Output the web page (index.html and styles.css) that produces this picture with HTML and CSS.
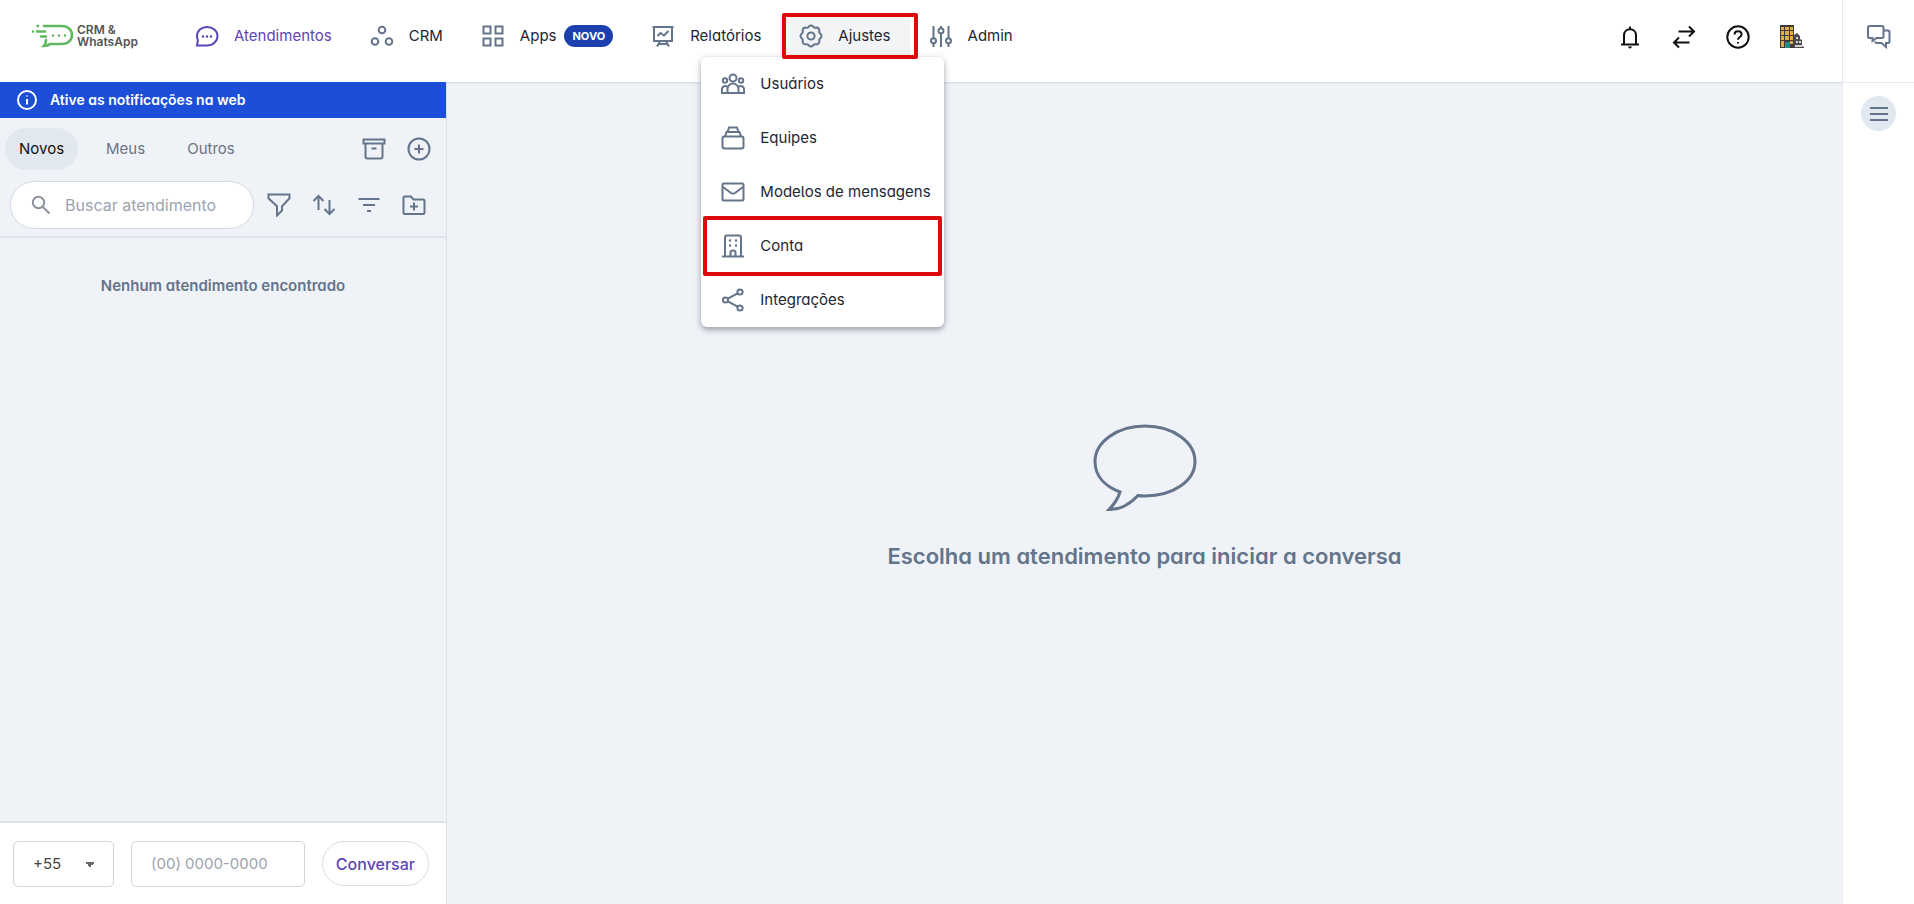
FILE: index.html
```html
<!DOCTYPE html>
<html lang="pt-BR">
<head>
    <meta charset="UTF-8">
    <meta name="viewport" content="width=device-width, initial-scale=1.0">
    <title>Atendimentos</title>
    <link rel="stylesheet" href="styles.css">
</head>
<body>
    <div class="app">

        <!-- Header -->
        <header class="header">
            <a class="logo" href="#" aria-label="CRM &amp; WhatsApp">
                <svg class="logo-mark" viewBox="0 0 42 24">
                    <path d="M12 2h18c6 0 10 4 10 9s-4 9-10 9H18c-2 2-3 2-6 2 2-2 2-4 2-6"/>
                    <path d="M5 7.500h8M9 12.500h5M1 7.500h0M5.500 2h.5"/>
                    <path d="M21 11.500h0M27 11.500h0M33 11.500h0"/>
                </svg>
                <span class="logo-text">CRM &amp;<br>WhatsApp</span>
            </a>

            <nav class="nav">
                <a class="nav-item active" href="#">
                    <svg class="icon" viewBox="0 0 24 24">
                        <path d="M2 21.500l.9-5.200A9.400 9.400 0 0 1 2 12c0-5.200 4.400-9 10-9s10.500 3.800 10.500 9-4.500 9.500-10.500 9.500z"/>
                        <path class="dots" d="M8 12.500h0M12 12.500h0M16 12.500h0"/>
                    </svg>
                    <span>Atendimentos</span>
                </a>
                <a class="nav-item" href="#">
                    <svg class="icon" viewBox="0 0 24 24">
                        <circle cx="12" cy="6" r="3.300"/><circle cx="5" cy="17.500" r="3.300"/><circle cx="19" cy="17.500" r="3.300"/>
                    </svg>
                    <span>CRM</span>
                </a>
                <a class="nav-item" href="#">
                    <svg class="icon" viewBox="0 0 24 24">
                        <path d="M2.500 2.500h7v7h-7zM14.500 2.500h7v7h-7zM2.500 14.500h7v7h-7zM14.500 14.500h7v7h-7z"/>
                    </svg>
                    <span>Apps</span>
                    <span class="badge">NOVO</span>
                </a>
                <a class="nav-item" href="#">
                    <svg class="icon" viewBox="0 0 24 24">
                        <path d="M1.500 3h21M3 3v14h18V3M9 17.500l-3 5M15 17.500l3 5M8 20h8"/>
                        <path d="M6.500 12l3-3 3.500 2.500 4.500-4.500"/>
                    </svg>
                    <span>Relatórios</span>
                </a>
                <div class="nav-group">
                    <button class="nav-item open marked" type="button" aria-expanded="true">
                        <svg class="icon" viewBox="0 0 24 24">
                            <path d="M9.800 2.500Q12 .5 14.200 2.500Q14.700 4.200 17.200 3.600Q20.300 3.700 20.400 6.800Q19.800 9.300 21.500 9.800Q23.500 12 21.500 14.200Q19.800 14.700 20.400 17.200Q20.300 20.300 17.200 20.400Q14.700 19.800 14.200 21.500Q12 23.500 9.800 21.500Q9.300 19.800 6.800 20.400Q3.700 20.300 3.600 17.200Q4.200 14.700 2.500 14.200Q.5 12 2.500 9.800Q4.200 9.300 3.600 6.800Q3.700 3.700 6.800 3.600Q9.300 4.200 9.800 2.500z"/>
                            <circle cx="12" cy="12" r="3.600"/>
                        </svg>
                        <span>Ajustes</span>
                    </button>

                    <!-- Ajustes menu -->
                    <div class="menu">
                        <a class="menu-item" href="#">
                            <svg class="icon" viewBox="0 0 24 24">
                                <circle cx="12" cy="6" r="3.500"/><circle cx="4" cy="8.500" r="2.200"/><circle cx="20" cy="8.500" r="2.200"/>
                                <path d="M6.500 21v-4a5.500 5.500 0 0 1 11 0v4zM6.500 21H.9v-3.500c0-2.800 2.600-4.200 5.600-3M17.500 21h5.600v-3.500c0-2.800-2.600-4.200-5.600-3"/>
                            </svg>
                            <span>Usuários</span>
                        </a>
                        <a class="menu-item" href="#">
                            <svg class="icon" viewBox="0 0 24 24">
                                <rect x="1.500" y="10.500" width="21" height="12" rx="2"/>
                                <path d="M4 10.500L5.500 6h13l1.500 4.500M6.500 6L8 1.500h8L17.500 6"/>
                            </svg>
                            <span>Equipes</span>
                        </a>
                        <a class="menu-item" href="#">
                            <svg class="icon" viewBox="0 0 24 24">
                                <rect x="1.500" y="3.500" width="21" height="17" rx="1.500"/>
                                <path d="M2 7l8 6q2 1.300 4 0l8-6"/>
                            </svg>
                            <span>Modelos de mensagens</span>
                        </a>
                        <a class="menu-item marked" href="#">
                            <svg class="icon" viewBox="0 0 24 24">
                                <path d="M1 22.500h22M4 22.500V3.500q0-2 2-2h12q2 0 2 2v19M9.500 22.500v-4q0-2 2.500-2t2.500 2v4"/>
                                <path class="dots" d="M9 6.500h0M15 6.500h0M9 11.500h0M15 11.500h0"/>
                            </svg>
                            <span>Conta</span>
                        </a>
                        <a class="menu-item" href="#">
                            <svg class="icon" viewBox="0 0 24 24">
                                <circle cx="4.500" cy="12" r="2.600"/><circle cx="19" cy="4" r="2.600"/><circle cx="19" cy="20" r="2.600"/>
                                <path d="M6.800 10.700l9.900-5.400M6.800 13.300l9.900 5.400"/>
                            </svg>
                            <span>Integrações</span>
                        </a>
                    </div>
                </div>
                <a class="nav-item" href="#">
                    <svg class="icon" viewBox="0 0 24 24">
                        <path d="M4.500 2v12M4.500 19.500V23M12 2v2M12 9.500V23M19.500 2v12M19.500 19.500V23"/>
                        <circle cx="4.500" cy="16.700" r="2.500"/><circle cx="12" cy="6.700" r="2.500"/><circle cx="19.500" cy="16.700" r="2.500"/>
                    </svg>
                    <span>Admin</span>
                </a>
            </nav>

            <div class="header-actions">
                <button class="icon-btn dark" type="button" aria-label="Notificações">
                    <svg class="icon" viewBox="0 0 24 24">
                        <path d="M3 19.500h18M6 19v-8.500C6 6.500 8.500 4.200 12 4.200s6 2.300 6 6.300V19M12 4V1.500"/>
                        <path d="M10 21.500h4q-.6 2-2 2t-2-2z" fill="currentColor" stroke="none"/>
                    </svg>
                </button>
                <button class="icon-btn dark" type="button" aria-label="Transferir">
                    <svg class="icon" viewBox="0 0 24 24">
                        <path d="M6.500 6.500h15M17 1.500l5 5-5 5M17.500 17.500h-15M7 12.500l-5 5 5 5"/>
                    </svg>
                </button>
                <button class="icon-btn dark" type="button" aria-label="Ajuda">
                    <svg class="icon" viewBox="0 0 24 24">
                        <circle cx="12" cy="12" r="10.700"/>
                        <path d="M8.500 9.500c0-2 1.500-3.300 3.500-3.300s3.600 1.300 3.600 3.200c0 2.600-3.600 2.700-3.600 5.400M12 17v1.500"/>
                    </svg>
                </button>
                <button class="icon-btn" type="button" aria-label="Empresa">
                    <svg class="icon company" viewBox="0 0 24 24">
                        <path fill="#3f3a35" d="M0 0h14v23H0z"/>
                        <path fill="#e3ad45" d="M1 2h3v3H1zM5 2h4v3H5zM10 2h3v3h-3zM1 6h3v4H1zM5 6h4v4H5zM10 6h3v4h-3zM1 11h3v4H1zM5 11h4v4H5zM10 11h3v4h-3zM1 16h3v6H1zM10 16h3v3h-3z"/>
                        <path fill="#258b83" d="M5 17h5v6H5z"/>
                        <path fill="#4a4a58" d="M14 10l3-2 3 3v3l2 1v6l2 1v1H14z"/>
                        <path fill="#d8d5cd" d="M16 12h2v2h-2zM16 16h2v2h-2zM19 16h2v2h-2zM15 20h7v2h-7z"/>
                    </svg>
                </button>
            </div>
        </header>

        <!-- Conversation list -->
        <aside class="sidebar">
            <button class="banner" type="button">
                <svg class="banner-icon" viewBox="0 0 20 20">
                    <circle cx="10" cy="10" r="9"/>
                    <path d="M10 9v5.500M10 5.500v1"/>
                </svg>
                <span>Ative as notificações na web</span>
            </button>

            <div class="filters">
                <div class="tabs">
                    <button class="tab selected" type="button">Novos</button>
                    <button class="tab" type="button">Meus</button>
                    <button class="tab" type="button">Outros</button>
                    <div class="actions">
                        <button class="icon-btn" type="button" aria-label="Arquivados">
                            <svg class="icon" viewBox="0 0 24 24">
                                <path d="M1.500 2.500h21v4h-21zM3.500 6.500v13q0 2 2 2h13q2 0 2-2v-13M9.500 11.500h5"/>
                            </svg>
                        </button>
                        <button class="icon-btn" type="button" aria-label="Novo atendimento">
                            <svg class="icon" viewBox="0 0 24 24">
                                <circle cx="12" cy="12" r="10.500"/><path d="M12 7.500v9M7.500 12h9"/>
                            </svg>
                        </button>
                    </div>
                </div>

                <div class="search-row">
                    <label class="search">
                        <svg class="search-icon" viewBox="0 0 20 20">
                            <circle cx="7.500" cy="7.500" r="5.700"/><path d="M12 12l6.500 6.500"/>
                        </svg>
                        <input type="text" placeholder="Buscar atendimento" aria-label="Buscar atendimento">
                    </label>
                    <div class="actions">
                        <button class="icon-btn" type="button" aria-label="Filtrar">
                            <svg class="icon" viewBox="0 0 24 24">
                                <path d="M1.500 1.500h21v3.800l-7.500 8v4.200l-5 5v-9.200l-8.500-8z"/>
                            </svg>
                        </button>
                        <button class="icon-btn" type="button" aria-label="Ordenar">
                            <svg class="icon" viewBox="0 0 24 24">
                                <path d="M6.500 17V3M1.500 8l5-5 5 5M17.500 7v14M12.500 16l5 5 5-5"/>
                            </svg>
                        </button>
                        <button class="icon-btn" type="button" aria-label="Agrupar">
                            <svg class="icon" viewBox="0 0 24 24">
                                <path d="M1.500 6h21M6 12h12M10 18h4"/>
                            </svg>
                        </button>
                        <button class="icon-btn" type="button" aria-label="Nova pasta">
                            <svg class="icon" viewBox="0 0 24 24">
                                <path d="M1.500 5q0-1.500 1.500-1.500h6l2.500 3H21q1.500 0 1.500 1.500v11.500q0 1.500-1.500 1.500H3q-1.500 0-1.500-1.500zM12 9.500v8M8 13.500h8"/>
                            </svg>
                        </button>
                    </div>
                </div>
            </div>

            <p class="empty-list">Nenhum atendimento encontrado</p>

            <form class="start-form">
                <select class="field country" aria-label="Código do país">
                    <option>+55</option>
                </select>
                <input class="field phone" type="tel" placeholder="(00) 0000-0000" aria-label="Telefone">
                <button class="start-btn" type="button">Conversar</button>
            </form>
        </aside>

        <!-- Conversation area -->
        <main class="main">
            <svg class="bubble" viewBox="0 0 104 88">
                <path d="M27 68C11 62 2 51 2 37.500 2 18 24 2 52 2s50 16 50 35.500S80 72 52 72q-4 0-7-.5C38 79 28 86 16 85.500c6-6 9-11 11-17.500z"/>
            </svg>
            <h1 class="main-title">Escolha um atendimento para iniciar a conversa</h1>
        </main>

        <!-- Right rail -->
        <aside class="rail">
            <div class="rail-top">
                <button class="icon-btn" type="button" aria-label="Chat interno">
                    <svg class="icon" viewBox="0 0 24 24">
                        <path d="M2.500 1h12.500q1.500 0 1.500 1.500v9q0 1.500-1.500 1.500H9.500l-4 3v-3h-3Q1 13 1 11.500v-9Q1 1 2.500 1z"/>
                        <path d="M16.500 5.500h4.500q1.500 0 1.500 1.500v9.500q0 1.500-1.500 1.500h-2v4l-4.500-4H9.500q-1 0-1.500-1.500"/>
                    </svg>
                </button>
            </div>
            <button class="rail-toggle" type="button" aria-label="Abrir painel">
                <svg viewBox="0 0 18 14"><path d="M0 1h18M0 7h18M0 13h18"/></svg>
            </button>
        </aside>

    </div>
</body>
</html>
```

FILE: styles.css
```css
/* Basic styling */
* {
    box-sizing: border-box;
}

body {
    margin: 0;
    font-family: Inter, "Liberation Sans", sans-serif;
    font-size: 15px;
    line-height: 24px;
    color: #1e2533;
    background-color: #eff3f8;
}

button,
input,
select {
    font: inherit;
    color: inherit;
}

button {
    border: none;
    background: none;
    padding: 0;
    cursor: pointer;
}

a {
    color: inherit;
    text-decoration: none;
}

svg {
    display: block;
    flex: none;
    fill: none;
    stroke: currentColor;
}

.app {
    display: grid;
    grid-template-columns: 447px 1fr 72px;
    grid-template-rows: 82px 1fr;
    min-height: 100vh;
}

/* Single-storey a for labels and headings */
.nav,
.banner,
.empty-list,
.main-title {
    font-feature-settings: "cv11";
}

/* Icons */
.icon {
    width: 24px;
    height: 24px;
    stroke-width: 2;
    color: #64748b;
}

.icon .dots {
    stroke-width: 2.5;
    stroke-linecap: round;
}

.icon.company {
    stroke: none;
}

.icon-btn.dark .icon {
    color: #111111;
}

/* Header */
.header {
    grid-column: 1 / 3;
    display: flex;
    align-items: flex-start;
    padding: 14px 38px 0 32px;
    background-color: #ffffff;
    box-shadow: 0 1px 2px #cfd6e0;
    position: relative;
    z-index: 2;
}

.logo {
    display: flex;
    align-items: center;
    gap: 3px;
    width: 144px;
    height: 44px;
}

.logo-mark {
    width: 42px;
    height: 24px;
    color: #5fb85f;
    stroke-width: 2.6;
    stroke-linecap: round;
}

.logo-text {
    font-size: 12px;
    line-height: 12px;
    font-weight: 600;
    color: #555555;
}

/* Navigation */
.nav {
    display: flex;
}

.nav-item {
    display: flex;
    align-items: center;
    gap: 15px;
    height: 44px;
    padding: 0 19px;
}

.nav-item.active,
.nav-item.active .icon {
    color: #5b45b8;
}

.nav-item.open {
    background-color: #f3f4f6;
}

.badge {
    margin-left: -7px;
    padding: 0 8px;
    border-radius: 11px;
    background-color: #1e40af;
    color: #ffffff;
    font-size: 11px;
    line-height: 22px;
    font-weight: 700;
}

.nav-group {
    position: relative;
    font-feature-settings: "cv11", "cv05";
}

/* Red highlight frame */
.marked {
    position: relative;
}

.marked::after {
    content: "";
    position: absolute;
    inset: -3px 2px;
    border: 4px solid #dc0a0a;
    border-radius: 2px;
}

.nav-item.marked::after {
    inset: -1px -8px -1px 2px;
    z-index: 2;
}

/* Dropdown menu */
.menu {
    position: absolute;
    top: 43px;
    left: -79px;
    width: 243px;
    border-radius: 6px;
    background-color: #ffffff;
    box-shadow: 0 3px 5px rgba(30, 41, 59, 0.3), 0 1px 8px rgba(30, 41, 59, 0.15);
}

.menu-item {
    display: flex;
    align-items: center;
    gap: 15px;
    height: 54px;
    padding: 0 20px;
    white-space: nowrap;
}

.header-actions {
    display: flex;
    align-items: center;
    gap: 30px;
    height: 46px;
    margin-left: auto;
}

/* Sidebar */
.sidebar {
    display: flex;
    flex-direction: column;
    border-right: 1px solid #dbe0e7;
}

.banner {
    display: flex;
    align-items: center;
    gap: 13px;
    height: 36px;
    padding: 0 17px;
    background-color: #1d4ed8;
    color: #ffffff;
    font-size: 14px;
    font-weight: 600;
    position: relative;
    z-index: 3;
}

.banner-icon {
    width: 20px;
    height: 20px;
    stroke-width: 2;
}

.filters {
    padding: 10px 15px 7px 5px;
    border-bottom: 2px solid #dfe4eb;
}

.tabs,
.search-row {
    display: flex;
    align-items: center;
    justify-content: space-between;
}

.tab {
    height: 42px;
    padding: 0 14px;
    margin-right: 14px;
    border-radius: 21px;
    color: #6b7280;
}

.tab.selected {
    background-color: #e2e8f0;
    color: #111111;
}

.actions {
    display: flex;
    gap: 21px;
    margin-left: auto;
}

.search-row {
    margin-top: 11px;
    padding: 0 5px;
}

.search {
    display: flex;
    align-items: center;
    gap: 14px;
    width: 244px;
    height: 48px;
    padding: 0 20px;
    border: 1px solid #d5dae1;
    border-radius: 24px;
    background-color: #ffffff;
}

.search-icon {
    width: 20px;
    height: 20px;
    stroke-width: 2;
    color: #8b919c;
}

.search input {
    width: 100%;
    min-width: 0;
    padding: 0;
    border: none;
    outline: none;
    background: none;
    font-size: 16px;
}

::placeholder {
    color: #9ca3af;
    opacity: 1;
}

.empty-list {
    flex: 1;
    margin: 36px 0 0;
    color: #64748b;
    font-weight: 600;
    text-align: center;
}

/* New conversation form */
.start-form {
    display: flex;
    align-items: center;
    gap: 17px;
    height: 83px;
    padding: 0 17px 0 13px;
    border-top: 2px solid #dfe3e8;
    background-color: #ffffff;
}

.field {
    height: 46px;
    border: 1px solid #d4d4d8;
    border-radius: 5px;
    background-color: #ffffff;
}

.country {
    width: 101px;
    padding: 0 19px;
    appearance: none;
    background-image: linear-gradient(to bottom left, #666666 50%, transparent 50%), linear-gradient(to bottom right, #666666 50%, transparent 50%);
    background-size: 5px 5px;
    background-position: 71px 20px, 76px 20px;
    background-repeat: no-repeat;
    color: #444444;
}

.phone {
    flex: 1;
    min-width: 0;
    padding: 0 19px;
}

.start-btn {
    height: 45px;
    padding: 0 13px;
    border: 1px solid #dcdce4;
    border-radius: 23px;
    color: #5b45b8;
    font-size: 16px;
    font-weight: 500;
}

/* Conversation area */
.main {
    display: flex;
    flex-direction: column;
    align-items: center;
    justify-content: center;
    gap: 28px;
    padding-top: 10px;
}

.bubble {
    width: 104px;
    height: 88px;
    stroke-width: 3;
    color: #64748b;
}

.main-title {
    margin: 0;
    color: #64748b;
    font-size: 22px;
    line-height: 32px;
    font-weight: 600;
}

/* Right rail */
.rail {
    grid-column: 3;
    grid-row: 1 / 3;
    display: flex;
    flex-direction: column;
    align-items: center;
    border-left: 1px solid #ebebef;
    background-color: #ffffff;
}

.rail-top {
    display: flex;
    align-items: flex-start;
    justify-content: center;
    width: 100%;
    height: 83px;
    padding-top: 25px;
    border-bottom: 1px solid #ebebef;
}

.rail-toggle {
    display: flex;
    align-items: center;
    justify-content: center;
    width: 35px;
    height: 35px;
    margin-top: 13px;
    border-radius: 50%;
    background-color: #e2e8f0;
    color: #64748b;
}

.rail-toggle svg {
    width: 18px;
    height: 14px;
    stroke-width: 2;
}
```
